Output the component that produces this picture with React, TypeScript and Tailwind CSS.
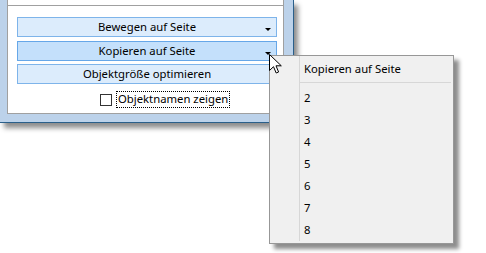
import React from "react";

const font = { fontFamily: '"Noto Sans", "Open Sans", sans-serif' };

function Arrow() {
  return <span className="absolute right-[5px] bottom-[5px] h-0 w-0 border-l-[3px] border-r-[3px] border-t-[3px] border-l-transparent border-r-transparent border-t-black" />;
}

function PanelButton({ label, hot, arrow }: { label: string; hot?: boolean; arrow?: boolean }) {
  return (
    <div
      className={`relative flex h-[20px] w-[260px] items-center justify-center border text-[11.3px] text-black ${
        hot ? "border-[#66a7e8] bg-[#c4e0fb]" : "border-[#7eb4ea] bg-[#dcecfc]"
      }`}
    >
      {label}
      {arrow ? <Arrow /> : null}
    </div>
  );
}

export default function App() {
  const pages = ["2", "3", "4", "5", "6", "7", "8"];

  return (
    <div className="relative h-[253px] w-[486px] overflow-hidden bg-white" style={font}>
      <div className="flex h-[123px] w-[294px] border-b border-r border-[#2a5f8a] bg-[#bcd2ea] pl-[7px] shadow-[4px_5px_5px_rgba(0,0,0,0.45)]">
        <div className="flex h-[114px] w-[277px] flex-col border-b border-l border-r border-[#a0a0a0] bg-white">
          <div className="h-[6px] border-b border-[#a0a0a0]" />
          <div className="ml-[9px] mt-[11px] flex flex-col">
            <PanelButton label="Bewegen auf Seite" arrow />
            <div className="mt-[4px]">
              <PanelButton label="Kopieren auf Seite" hot arrow />
            </div>
            <div className="mt-[3px]">
              <PanelButton label="Objektgröße optimieren" />
            </div>
          </div>
          <div className="ml-[92px] mt-[7px] flex items-center gap-[4px]">
            <span className="h-[12px] w-[12px] border border-[#333] bg-white" />
            <span className="flex h-[17px] items-center border border-dotted border-black px-[1px] text-[11.3px] text-black">
              Objektnamen zeigen
            </span>
          </div>
        </div>
      </div>

      <div className="absolute left-[269px] top-[55px] flex h-[189px] w-[185px] border border-[#979797] bg-[#f0f0f0] shadow-[5px_5px_4px_rgba(0,0,0,0.45)]">
        <div className="w-[29px]" />
        <div className="mb-[2px] flex flex-1 flex-col border-l border-[#d7d7d7]">
          <div className="flex h-[27px] items-center pl-[4px] text-[11.3px] text-black">Kopieren auf Seite</div>
          <div className="mr-[2px] h-px bg-[#d7d7d7]" />
          <div className="flex flex-col pt-[4px]">
            {pages.map((p) => (
              <div key={p} className="flex h-[22px] items-center pl-[4px] text-[11.3px] text-black">
                {p}
              </div>
            ))}
          </div>
        </div>
      </div>

      <svg className="absolute left-[269px] top-[54px]" width="14" height="21" viewBox="0 0 14 21">
        <path d="M0.5 0.5 L0.5 16.5 L4.5 12.7 L7.2 19 L9.6 18 L7 11.8 L12.3 11.8 Z" fill="white" stroke="black" strokeWidth="1" strokeLinejoin="miter" />
      </svg>
    </div>
  );
}
